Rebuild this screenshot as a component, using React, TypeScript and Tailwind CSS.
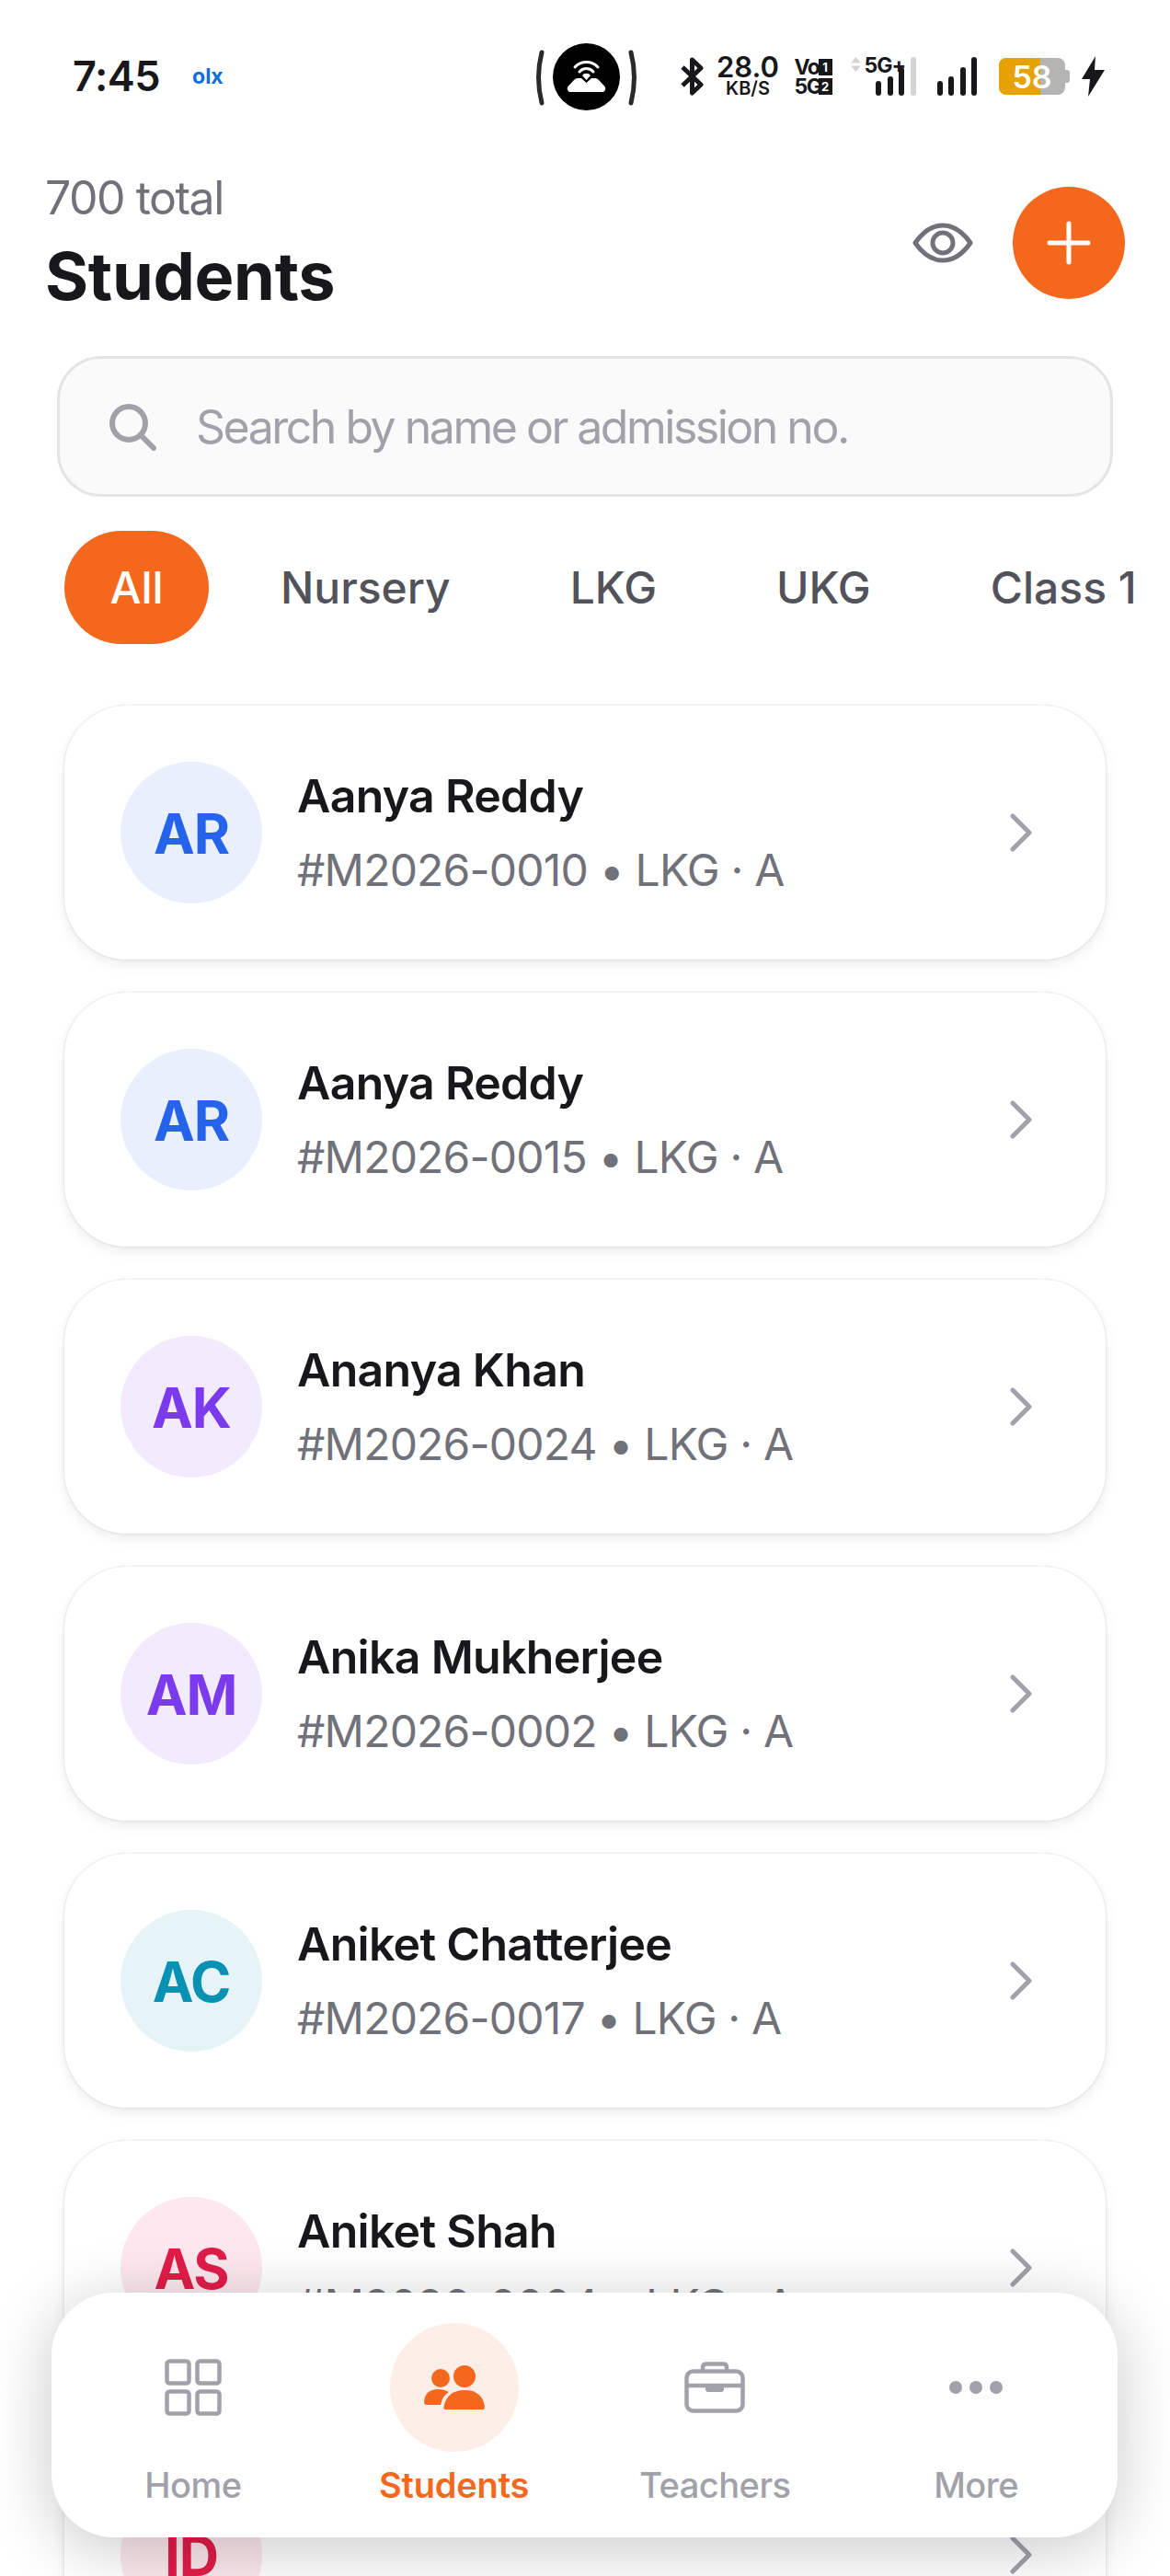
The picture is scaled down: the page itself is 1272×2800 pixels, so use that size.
const students = [
  { initials: "AR", name: "Aanya Reddy", meta: "#M2026-0010 • LKG · A", tone: "bg-[#e9effd] text-[#2563eb]" },
  { initials: "AR", name: "Aanya Reddy", meta: "#M2026-0015 • LKG · A", tone: "bg-[#e9effd] text-[#2563eb]" },
  { initials: "AK", name: "Ananya Khan", meta: "#M2026-0024 • LKG · A", tone: "bg-[#f1ebfd] text-[#7c3aed]" },
  { initials: "AM", name: "Anika Mukherjee", meta: "#M2026-0002 • LKG · A", tone: "bg-[#f1ebfd] text-[#7c3aed]" },
  { initials: "AC", name: "Aniket Chatterjee", meta: "#M2026-0017 • LKG · A", tone: "bg-[#e6f4f7] text-[#0891b2]" },
  { initials: "AS", name: "Aniket Shah", meta: "#M2026-0004 • LKG · A", tone: "bg-[#fce8ee] text-[#e11d48]" },
  { initials: "ID", name: "Ishaan Das", meta: "#M2026-0011 • LKG · A", tone: "bg-[#fce8ee] text-[#e11d48]" },
]

function StudentCard({ s }: { s: (typeof students)[number] }) {
  return (
    <div className="flex h-[276px] shrink-0 items-center rounded-[68px] bg-white pr-[79px] pl-[61px] shadow-[0_0_3px_rgba(0,0,0,0.14),0_6px_14px_rgba(0,0,0,0.07)]">
      <div className={`flex h-[154px] w-[154px] shrink-0 items-center justify-center rounded-full pt-[2px] text-[60px] font-bold tracking-[-1px] ${s.tone}`}>
        {s.initials}
      </div>
      <div className="ml-[38px] flex-1">
        <div className="text-[50px] leading-[60px] font-semibold tracking-[-0.7px] text-[#18181b]">{s.name}</div>
        <div className="mt-[21px] text-[48px] leading-[60px] tracking-[-0.8px] text-[#71717a]">{s.meta}</div>
      </div>
      <svg width="26" height="42" viewBox="0 0 26 42" fill="none" stroke="#a1a1aa" strokeWidth="5" strokeLinecap="round" strokeLinejoin="round">
        <path d="M4 3l18 18L4 39" />
      </svg>
    </div>
  )
}

function Bars({ last }: { last: string }) {
  return (
    <div className="flex h-[42px] items-end gap-[6.5px]">
      <span className="h-[16px] w-[6px] rounded-full bg-[#18181b]" />
      <span className="h-[21px] w-[6px] rounded-full bg-[#18181b]" />
      <span className="h-[31px] w-[6px] rounded-full bg-[#18181b]" />
      <span className={`h-[42px] w-[6px] rounded-full ${last}`} />
    </div>
  )
}

function StatusBar() {
  return (
    <div className="flex h-[166px] shrink-0 items-center pr-[71px] pl-[79px] text-[#18181b]">
      <span className="text-[45px] font-semibold tracking-[-0.5px]">7:45</span>
      <span className="ml-[35px] text-[23px] font-bold text-[#0f6fdc]">olx</span>
      <div className="ml-auto flex items-center">
        <svg width="113" height="73" viewBox="0 0 113 73" fill="none">
          <path d="M8 10Q1 37 8 65M105 10Q112 37 105 65" stroke="#2a2a2a" strokeWidth="5" strokeLinecap="round" />
          <circle cx="56.5" cy="36.5" r="36.5" fill="#000" />
          <path d="M38 53H75a4 4 0 0 0 1.5-6L70 40a5 5 0 0 0-4-2H62l-5.500 5-5.500-5H47a5 5 0 0 0-4 2l-6.500 7A4 4 0 0 0 38 53z" fill="#fff" />
          <path d="M44 26a17 17 0 0 1 25 0M49 31a10 10 0 0 1 15 0" stroke="#fff" strokeWidth="3" strokeLinecap="round" />
          <path d="M52 35a5 4 0 0 1 9 0l-4.500 5z" fill="#fff" />
        </svg>
        <svg className="ml-[46px]" width="25" height="42" viewBox="0 0 25 42" fill="none" stroke="#18181b" strokeWidth="5" strokeLinejoin="round">
          <path d="M2 11l20 19-9.500 9V3l9.500 9L2 31" />
        </svg>
        <div className="ml-[15px] flex w-[67px] flex-col items-center font-semibold whitespace-nowrap">
          <span className="text-[31px] leading-[26px]">28.0</span>
          <span className="text-[20px] leading-[20px]">KB/S</span>
        </div>
        <div className="ml-[17px] grid w-[41px] grid-cols-[26px_15px] gap-y-[3px] text-[23px] leading-[18px] font-bold tracking-[-1.5px]">
          <span>Vo</span>
          <span className="flex h-[18px] items-center justify-center bg-[#18181b] text-[13px] tracking-normal text-white">1</span>
          <span>5G</span>
          <span className="flex h-[18px] items-center justify-center bg-[#18181b] text-[13px] tracking-normal text-white">2</span>
        </div>
        <div className="relative ml-[20px] flex h-[42px] w-[71px] items-end justify-end">
          <svg className="absolute top-0 left-0" width="11" height="16" viewBox="0 0 11 16" fill="#d4d4d4">
            <path d="M5.500 0L11 6.500H0zM0 9.500h11L5.500 16z" />
          </svg>
          <span className="absolute top-[-3px] left-[15px] text-[23px] leading-[24px] font-bold tracking-[-1px]">5G+</span>
          <Bars last="bg-[#d4d4d4]" />
        </div>
        <div className="ml-[23px]">
          <Bars last="bg-[#18181b]" />
        </div>
        <div className="ml-[24px] flex items-center">
          <div className="relative flex h-[40px] w-[72px] overflow-hidden rounded-[8px] bg-[#b4b4b4]">
            <span className="w-[45px] bg-[#e5a200]" />
            <span className="absolute inset-0 flex items-center justify-center text-[34px] font-semibold text-white">58</span>
          </div>
          <span className="h-[14px] w-[5px] rounded-r-[3px] bg-[#b4b4b4]" />
        </div>
        <svg className="ml-[13px]" width="25" height="44" viewBox="0 0 25 44" fill="#18181b">
          <path d="M15 0L0 25h9L7 44 25 15H14z" />
        </svg>
      </div>
    </div>
  )
}

function NavItem({ label, active, children }: { label: string; active?: boolean; children: React.ReactNode }) {
  return (
    <div className="flex flex-col items-center pt-[33px]">
      <div className={active ? "flex h-[140px] w-[140px] items-center justify-center rounded-full bg-[#fdefe8]" : "flex h-[140px] items-center justify-center"}>
        {children}
      </div>
      <span className={active ? "mt-[8px] text-[38px] font-semibold tracking-[-0.2px] text-[#f4681d]" : "mt-[8px] text-[38px] font-medium tracking-[-0.5px] text-[#a1a1aa]"}>
        {label}
      </span>
    </div>
  )
}

function BottomNav() {
  return (
    <div className="absolute top-[2492px] left-[56px] grid h-[266px] w-[1159px] grid-cols-4 rounded-[68px] bg-white px-[12px] shadow-[0_12px_70px_rgba(0,0,0,0.22)]">
      <NavItem label="Home">
        <svg width="62" height="62" viewBox="0 0 62 62" fill="none" stroke="#a1a1aa" strokeWidth="4.500" strokeLinejoin="round">
          <rect x="2.500" y="2.500" width="24" height="24" rx="3" />
          <rect x="35.500" y="2.500" width="24" height="24" rx="3" />
          <rect x="2.500" y="35.500" width="24" height="24" rx="3" />
          <rect x="35.500" y="35.500" width="24" height="24" rx="3" />
        </svg>
      </NavItem>
      <NavItem label="Students" active>
        <svg width="66" height="48" viewBox="0 0 66 48" fill="#f4681d">
          <circle cx="18" cy="14" r="10" />
          <circle cx="44" cy="12" r="12" />
          <path d="M0 40q1-14 15-14 7 0 12 3-7 4-9 14H3q-3 0-3-3z" />
          <path d="M23 48q-2 0-1.500-3Q25 27 44 27t22 18q0 3-2 3z" />
        </svg>
      </NavItem>
      <NavItem label="Teachers">
        <svg width="66" height="56" viewBox="0 0 66 56" fill="none" stroke="#a1a1aa" strokeWidth="4.500" strokeLinejoin="round">
          <rect x="2.500" y="10.500" width="61" height="43" rx="7" />
          <path d="M20 10V6q0-3.500 4-3.500h18q4 0 4 3.500v4M2.500 26h61" />
          <path d="M23 26h20v4q0 3-3 3H26q-3 0-3-3z" fill="#a1a1aa" stroke="none" />
        </svg>
      </NavItem>
      <NavItem label="More">
        <div className="flex items-center gap-[8px]">
          <span className="h-[14px] w-[14px] rounded-full bg-[#a1a1aa]" />
          <span className="h-[14px] w-[14px] rounded-full bg-[#a1a1aa]" />
          <span className="h-[14px] w-[14px] rounded-full bg-[#a1a1aa]" />
        </div>
      </NavItem>
    </div>
  )
}

export default function App() {
  return (
    <div className="relative flex h-[2800px] flex-col overflow-hidden bg-white font-['Inter',sans-serif]">
      <StatusBar />
      <div className="mt-[19px] flex items-start justify-between pr-[49px] pl-[49px]">
        <div>
          <div className="text-[50px] leading-[60px] tracking-[-1.5px] text-[#71717a]">700 total</div>
          <div className="mt-[15px] text-[72px] leading-[80px] font-bold tracking-[-0.3px] text-[#18181b]">Students</div>
        </div>
        <div className="mt-[18px] flex items-center gap-[43px]">
          <svg width="66" height="44" viewBox="0 0 66 44" fill="none" stroke="#71717a" strokeWidth="5" strokeLinejoin="round">
            <path d="M3 22C12 9 22 3 33 3s21 6 30 19c-9 13-19 19-30 19S12 35 3 22z" />
            <circle cx="33" cy="22" r="11" />
          </svg>
          <div className="flex h-[122px] w-[122px] items-center justify-center rounded-full bg-[#f4681d]">
            <svg width="48" height="48" viewBox="0 0 48 48" fill="none" stroke="#fff" strokeWidth="5" strokeLinecap="round">
              <path d="M24 3v42M3 24h42" />
            </svg>
          </div>
        </div>
      </div>
      <div className="mx-[62px] mt-[47px] flex h-[153px] shrink-0 items-center rounded-[48px] border-[3px] border-[#e4e4e7] bg-[#fafafa] pl-[53px]">
        <svg width="52" height="52" viewBox="0 0 52 52" fill="none" stroke="#a1a1aa" strokeWidth="6" strokeLinecap="round">
          <circle cx="22" cy="22" r="18" />
          <path d="M36 36l13 13" />
        </svg>
        <span className="mt-[2px] ml-[43px] text-[50px] tracking-[-2.500px] text-[#a1a1aa]">Search by name or admission no.</span>
      </div>
      <div className="mt-[37px] flex shrink-0 items-center overflow-hidden pl-[70px] text-[48px] font-normal whitespace-nowrap">
        <div className="flex h-[123px] w-[157px] shrink-0 items-center justify-center rounded-full bg-[#f4681d] font-medium text-white">All</div>
        <div className="ml-[13px] flex h-[123px] shrink-0 items-center px-[65px] font-medium text-[#52525b]">Nursery</div>
        <div className="flex h-[123px] shrink-0 items-center px-[65px] font-medium text-[#52525b]">LKG</div>
        <div className="flex h-[123px] shrink-0 items-center px-[65px] font-medium text-[#52525b]">UKG</div>
        <div className="flex h-[123px] shrink-0 items-center px-[65px] font-medium text-[#52525b]">Class 1</div>
      </div>
      <div className="mx-[70px] mt-[67px] flex flex-col gap-[36px]">
        {students.map((s, i) => (
          <StudentCard key={i} s={s} />
        ))}
      </div>
      <BottomNav />
    </div>
  )
}
